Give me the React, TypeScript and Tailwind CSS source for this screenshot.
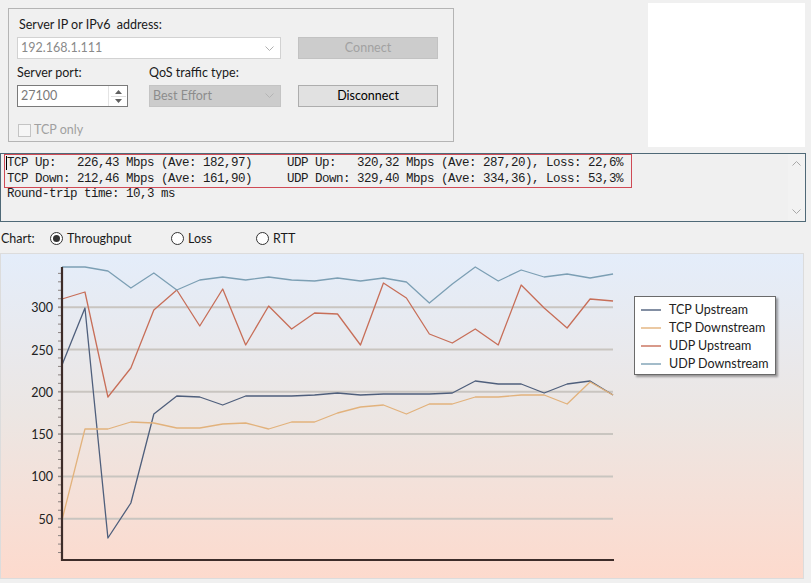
import React from 'react';

const tcpUp = [364, 307, 537, 502, 413, 395, 396, 404, 395, 395, 395, 394, 392, 394, 393, 393, 393, 392, 380, 383, 383, 392, 383, 380, 394];
const tcpDown = [519, 428, 428, 421, 422, 427, 427, 423, 422, 428, 421, 421, 412, 406, 404, 413, 403, 403, 396, 396, 394, 394, 403, 381, 394];
const udpUp = [298, 291, 396, 367, 309, 289, 325, 288, 344, 305, 328, 312, 313, 344, 282, 297, 333, 342, 328, 344, 284, 307, 327, 298, 300];
const udpDown = [266, 266, 270, 287, 272, 289, 279, 276, 279, 276, 279, 280, 277, 280, 277, 281, 302, 283, 266, 280, 269, 276, 273, 277, 273];

const series = [
  { name: 'TCP Upstream', color: '#4f5f7c', data: tcpUp },
  { name: 'TCP Downstream', color: '#e2b27c', data: tcpDown },
  { name: 'UDP Upstream', color: '#c76e58', data: udpUp },
  { name: 'UDP Downstream', color: '#7c9fb4', data: udpDown },
];

// value -> page y
const vy = (v: number) => 560 - v * 0.846;
const px = (i: number) => 61 + i * 22.96;

function Chevron({ color = '#b0b0b0' }: { color?: string }) {
  return (
    <svg width="9" height="6" viewBox="0 0 9 6">
      <path d="M0.5 0.5 L4.5 4.5 L8.5 0.5" fill="none" stroke={color} strokeWidth="1" />
    </svg>
  );
}

function Radio({ checked, label, width }: { checked?: boolean; label: string; width: string }) {
  return (
    <div className={`flex items-center gap-[4px] ${width}`}>
      <span className="w-[13px] h-[13px] rounded-full border border-[#333] bg-white flex items-center justify-center">
        {checked && <span className="w-[7px] h-[7px] rounded-full bg-[#333]" />}
      </span>
      <span className="pt-[2px]">{label}</span>
    </div>
  );
}

function Chart() {
  const ticks: number[] = [];
  for (let v = 10; v <= 340; v += 10) ticks.push(v);
  const grid = [50, 100, 150, 200, 250, 300];
  return (
    <svg className="absolute inset-0" width="804" height="326" viewBox="0 253 804 326">
      {grid.map((v) => (
        <line key={v} x1="57" x2="612" y1={vy(v)} y2={vy(v)} stroke="#c9c5c0" strokeWidth="2" />
      ))}
      {ticks.map((v) => (
        <line key={v} x1="57" x2="61" y1={vy(v)} y2={vy(v)} stroke="#8a8280" strokeWidth="1" />
      ))}
      {grid.map((v) => (
        <text
          key={v}
          x="52"
          y={vy(v) + 5}
          textAnchor="end"
          fontFamily="Lato, sans-serif"
          fontSize="12.5"
          fill="#222"
        >
          {v}
        </text>
      ))}
      {series.map((s) => (
        <polyline
          key={s.name}
          points={s.data.map((y, i) => `${px(i)},${y}`).join(' ')}
          fill="none"
          stroke={s.color}
          strokeWidth="1.3"
          strokeLinejoin="round"
        />
      ))}
      <line x1="61" x2="61" y1="266" y2="560" stroke="#3d2c29" strokeWidth="2.2" />
      <line x1="60" x2="613" y1="559" y2="559" stroke="#3d2c29" strokeWidth="2.2" />
    </svg>
  );
}

export default function App() {
  return (
    <div className="w-[811px] h-[583px] bg-[#f0f0f0] overflow-hidden font-['Lato',sans-serif] text-[12.5px] text-[#1a1a1a]">
      {/* top row */}
      <div className="flex items-start h-[153px]">
        <div className="ml-[8px] mt-[8px] w-[446px] h-[134px] border border-[#b4b4b4] flex flex-col pl-[8px] pt-[8px]">
          <div className="ml-[2px] h-[16px] leading-[16px]">Server IP or IPv6&nbsp; address:</div>
          <div className="flex mt-[4px] h-[22px]">
            <div className="w-[264px] h-[22px] bg-white border border-[#d2d2d2] flex items-center justify-between pl-[3px] pr-[6px] pt-[1px] text-[#8a8a8a]">
              <span>192.168.1.111</span>
              <Chevron />
            </div>
            <div className="ml-[17px] w-[140px] h-[22px] bg-[#cccccc] border border-[#c2c2c2] flex items-center justify-center pt-[1px] text-[#a2a2a2]">
              Connect
            </div>
          </div>
          <div className="flex mt-[6px] h-[16px] leading-[16px]">
            <span className="w-[132px]">Server port:</span>
            <span>QoS traffic type:</span>
          </div>
          <div className="flex mt-[4px] h-[22px]">
            <div className="w-[111px] h-[22px] bg-white border border-[#7a7a7a] flex items-center justify-between pl-[3px] text-[#7a7a7a]">
              <span className="pt-[1px]">27100</span>
              <div className="w-[19px] h-[20px] flex flex-col items-center justify-center gap-[2px] border-l border-[#e4e4e4]">
                <svg width="7" height="4" viewBox="0 0 7 4">
                  <path d="M0 4 L3.5 0 L7 4 Z" fill="#606060" />
                </svg>
                <div className="w-[15px] h-px bg-[#e0e0e0]" />
                <svg width="7" height="4" viewBox="0 0 7 4">
                  <path d="M0 0 L3.5 4 L7 0 Z" fill="#606060" />
                </svg>
              </div>
            </div>
            <div className="ml-[21px] w-[132px] h-[22px] bg-[#cccccc] border border-[#c4c4c4] flex items-center justify-between pl-[3px] pr-[6px] text-[#8c8c8c]">
              <span className="pt-[1px]">Best Effort</span>
              <Chevron color="#b4b4b4" />
            </div>
            <div className="ml-[17px] w-[140px] h-[22px] bg-[#e1e1e1] border border-[#adadad] flex items-center justify-center pt-[1px] text-black">
              Disconnect
            </div>
          </div>
          <div className="flex items-center mt-[16px] h-[14px] ml-[1px] gap-[3px] text-[#a0a0a0]">
            <span className="w-[13px] h-[13px] border border-[#c4c4c4] bg-[#f6f6f6]" />
            <span className="pt-[1px]">TCP only</span>
          </div>
        </div>
        <div className="ml-auto mr-[6px] mt-[3px] w-[157px] h-[144px] bg-white" />
      </div>

      {/* status text */}
      <div className="w-[806px] h-[69px] border border-[#4f6977] flex font-['Liberation_Mono',monospace] text-[12.5px] tracking-[-0.5px] text-[#1c1c1c]">
        <div className="flex-1 flex flex-col">
          <div className="relative ml-[3px] w-[628px] h-[34px] border border-[#cf4a55] pl-[2px] whitespace-pre leading-[16px]">
            <span className="absolute left-[1px] top-[1px] w-px h-[14px] bg-black" />
            <div>TCP Up:   226,43 Mbps (Ave: 182,97)     UDP Up:   320,32 Mbps (Ave: 287,20), Loss: 22,6%</div>
            <div>TCP Down: 212,46 Mbps (Ave: 161,90)     UDP Down: 329,40 Mbps (Ave: 334,36), Loss: 53,3%</div>
          </div>
          <div className="pl-[6px] -mt-[2px] leading-[16px] whitespace-pre">Round-trip time: 10,3 ms</div>
        </div>
        <div className="w-[17px] flex flex-col items-center justify-between py-[6px] bg-[#f2f2f2]">
          <div className="rotate-180">
            <Chevron color="#a8a8a8" />
          </div>
          <Chevron color="#a8a8a8" />
        </div>
      </div>

      {/* chart selector */}
      <div className="flex items-center h-[31px] pl-[1px] pt-[1px]">
        <span className="w-[49px] pt-[2px]">Chart:</span>
        <Radio checked label="Throughput" width="w-[121px]" />
        <Radio label="Loss" width="w-[85px]" />
        <Radio label="RTT" width="w-[60px]" />
      </div>

      {/* chart */}
      <div className="relative w-[804px] h-[326px] border border-[#dcdcdc] bg-gradient-to-b from-[#e4edfa] via-[#ece6e3] to-[#fddacd]">
        <Chart />
        <div className="absolute left-[633px] top-[42px] w-[142px] h-[79px] bg-white border border-[#6a6a6a] shadow-[2px_2px_2px_rgba(0,0,0,0.35)] flex flex-col pt-[4px] pl-[6px]">
          {series.map((s) => (
            <div key={s.name} className="flex items-center h-[18px] gap-[8px] text-[#222]">
              <span className="w-[20px] h-[2px]" style={{ backgroundColor: s.color, opacity: 0.7 }} />
              <span className="pt-[1px]">{s.name}</span>
            </div>
          ))}
        </div>
      </div>
    </div>
  );
}
